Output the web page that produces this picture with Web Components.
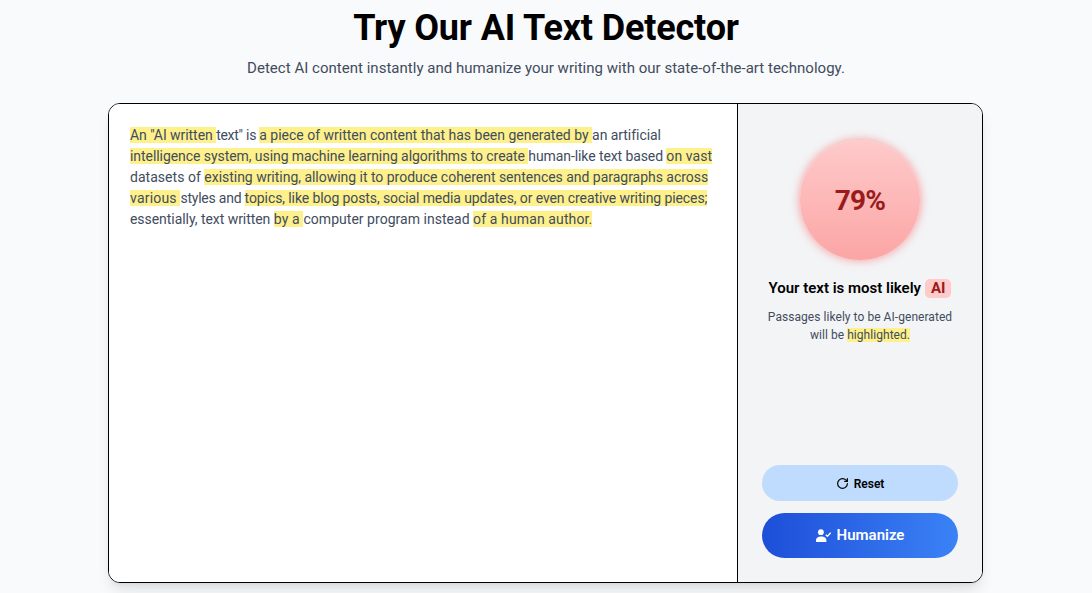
<!DOCTYPE html>
<html>
<head>
<meta charset="utf-8">
<title>AI Text Detector</title>
<style>
  html, body { margin: 0; height: 100%; }
  body { background: #f9fafb; font-family: Roboto, "Liberation Sans", sans-serif; overflow: hidden; }
</style>
</head>
<body>
<detector-page>
  <span slot="title">Try Our AI Text Detector</span>
  <span slot="subtitle">Detect AI content instantly and humanize your writing with our state-of-the-art technology.</span>
  <detector-card>
    <text-panel slot="left">
      <mark-text>An "AI written </mark-text><span style="letter-spacing:-.27px">text" is </span><mark-text style="letter-spacing:-.01px">a piece of written content that has been generated by </mark-text>an artificial
      <mark-text style="letter-spacing:-.065px">intelligence system, using machine learning algorithms to create </mark-text><span style="letter-spacing:-.095px">human-like text based </span><mark-text style="letter-spacing:.09px">on vast</mark-text>
      <span style="letter-spacing:.03px">datasets of </span><mark-text style="letter-spacing:-.025px">existing writing, allowing it to produce coherent sentences and paragraphs across</mark-text>
      <mark-text style="letter-spacing:.2px">various </mark-text><span style="letter-spacing:-.23px">styles and </span><mark-text style="letter-spacing:-.1px">topics, like blog posts, social media updates, or even creative writing pieces;</mark-text>
      essentially, text written <mark-text style="letter-spacing:.15px">by a </mark-text><span style="letter-spacing:.03px">computer program instead </span><mark-text style="letter-spacing:.12px">of a human author.</mark-text>
    </text-panel>
    <score-panel slot="right">
      <score-ring value="79%"></score-ring>
      <span slot="verdict">Your text is most likely</span>
      <span slot="badge">AI</span>
      <span slot="note">Passages likely to be AI-generated will be <mark-text>highlighted.</mark-text></span>
      <pill-button slot="actions" kind="light">
        <svg slot="icon" width="13" height="13" viewBox="0 0 24 24" fill="none" stroke="currentColor" stroke-width="2.2" stroke-linecap="round" stroke-linejoin="round"><path d="M21 12a9 9 0 1 1-9-9c2.520 0 4.930 1 6.740 2.740L21 8"/><path d="M21 3v5h-5"/></svg>
        Reset
      </pill-button>
      <pill-button slot="actions" kind="primary">
        <svg slot="icon" width="15" height="13" viewBox="0 0 15 13" fill="currentColor"><circle cx="4.900" cy="3.200" r="2.900"/><path d="M0 13v-1.500C0 8.500 2.400 7.500 5.200 7.500s5.200 1 5.200 4V13Z"/><path d="M9.800 5.700l1.600 1.600 3.300-3.500" fill="none" stroke="currentColor" stroke-width="1.300"/></svg>
        Humanize
      </pill-button>
    </score-panel>
  </detector-card>
</detector-page>

<script>
class DetectorPage extends HTMLElement {
  constructor() {
    super()
    this.attachShadow({ mode: "open" }).innerHTML = `
      <style>
        :host { display: flex; flex-direction: column; align-items: center; }
        h1 { margin: 6px 0 0; font-size: 36px; line-height: 44px; font-weight: 700; color: #000; letter-spacing: -.16px; }
        p { margin: 7px 0 0; font-size: 15px; line-height: 22px; color: #414c5e; letter-spacing: .02px; }
        .body { margin: 24px 1px 0 0; }
      </style>
      <h1><slot name="title"></slot></h1>
      <p><slot name="subtitle"></slot></p>
      <div class="body"><slot></slot></div>`
  }
}

class DetectorCard extends HTMLElement {
  constructor() {
    super()
    this.attachShadow({ mode: "open" }).innerHTML = `
      <style>
        :host {
          display: flex; box-sizing: border-box; width: 875px; height: 480px;
          background: #fff; border: 1px solid #000; border-radius: 12px; overflow: hidden;
          box-shadow: 0 10px 15px -3px rgba(0, 0, 0, .1), 0 4px 6px -4px rgba(0, 0, 0, .1);
        }
      </style>
      <slot name="left"></slot>
      <slot name="right"></slot>`
  }
}

class TextPanel extends HTMLElement {
  constructor() {
    super()
    this.attachShadow({ mode: "open" }).innerHTML = `
      <style>
        :host {
          display: block; box-sizing: border-box; width: 629px; padding: 21px;
          font-size: 14px; line-height: 21px; color: #414c5e; background: #fff;
          border-right: 1px solid #000; letter-spacing: -.05px;
        }
      </style>
      <slot></slot>`
  }
}

class MarkText extends HTMLElement {
  constructor() {
    super()
    this.attachShadow({ mode: "open" }).innerHTML = `
      <style>:host { display: inline; background: #fef08a; }</style><slot></slot>`
  }
}

class ScoreRing extends HTMLElement {
  constructor() {
    super()
    this.attachShadow({ mode: "open" }).innerHTML = `
      <style>
        :host {
          display: flex; align-items: center; justify-content: center;
          width: 120px; height: 120px; border-radius: 50%;
          background: linear-gradient(180deg, #fecaca, #fca5a5);
          box-shadow: 0 0 8px 1px rgba(248, 113, 113, .6);
          font-size: 28px; font-weight: 700; color: #991b1b; letter-spacing: -.8px;
        }
      </style>
      <span></span>`
    this.shadowRoot.querySelector("span").textContent = this.getAttribute("value")
  }
}

class ScorePanel extends HTMLElement {
  constructor() {
    super()
    this.attachShadow({ mode: "open" }).innerHTML = `
      <style>
        :host {
          display: flex; flex-direction: column; align-items: center; flex: 1;
          box-sizing: border-box; padding: 36px 24px 24px; background: #f3f4f6;
        }
        .verdict { display: flex; align-items: center; gap: 4px; margin-top: 19px; font-size: 15px; line-height: 19px; font-weight: 600; color: #000; }
        .badge { padding: 0 6px; border-radius: 5px; background: #fecaca; color: #991b1b; font-weight: 700; }
        .note { margin-top: 11px; font-size: 12px; line-height: 17.5px; color: #414c5e; text-align: center; letter-spacing: .05px; }
        .actions { margin-top: auto; align-self: stretch; display: flex; flex-direction: column; gap: 12px; }
      </style>
      <slot></slot>
      <div class="verdict"><slot name="verdict"></slot><span class="badge"><slot name="badge"></slot></span></div>
      <div class="note"><slot name="note"></slot></div>
      <div class="actions"><slot name="actions"></slot></div>`
  }
}

class PillButton extends HTMLElement {
  constructor() {
    super()
    this.attachShadow({ mode: "open" }).innerHTML = `
      <style>
        :host { display: flex; align-items: center; justify-content: center; gap: 5px; border-radius: 9999px; cursor: pointer; box-sizing: border-box; }
        :host([kind="light"]) { height: 36px; padding-top: 1px; background: #bfdbfe; color: #000; font-size: 12px; font-weight: 600; }
        :host([kind="primary"]) { height: 45px; padding-bottom: 1px; gap: 6px; background: linear-gradient(90deg, #1d4ed8, #3b82f6); color: #fff; font-size: 15px; font-weight: 600; }
        .icon { display: flex; }
      </style>
      <span class="icon"><slot name="icon"></slot></span>
      <span><slot></slot></span>`
  }
}

customElements.define("detector-page", DetectorPage)
customElements.define("detector-card", DetectorCard)
customElements.define("text-panel", TextPanel)
customElements.define("mark-text", MarkText)
customElements.define("score-ring", ScoreRing)
customElements.define("score-panel", ScorePanel)
customElements.define("pill-button", PillButton)
</script>
</body>
</html>
